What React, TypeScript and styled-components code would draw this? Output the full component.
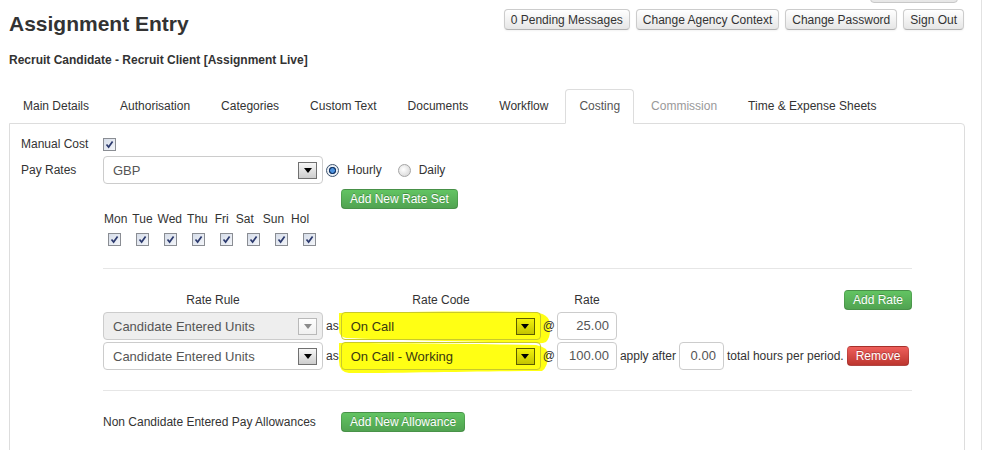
import React from 'react';
import styled, { createGlobalStyle } from 'styled-components';

const GlobalStyle = createGlobalStyle`
  html, body {
    margin: 0;
    padding: 0;
    background: #fff;
    overflow: hidden;
  }
  body {
    font-family: "Liberation Sans", Arial, sans-serif;
    font-size: 12px;
    color: #333;
  }
`;

const Page = styled.div`
  box-sizing: border-box;
  width: 982px;
  min-height: 450px;
  padding: 0 16px 0 9px;
  border-right: 1px solid #e2e2e2;
`;

const StubRow = styled.div`
  display: flex;
  justify-content: flex-end;
  height: 3px;
`;

const StubButton = styled.div`
  box-sizing: border-box;
  width: 88px;
  height: 21px;
  margin-top: -18px;
  margin-right: 7px;
  border: 1px solid #c8c8c8;
  border-radius: 4px;
  background: linear-gradient(#ffffff, #e6e6e6);
`;

const Header = styled.div`
  display: flex;
  justify-content: space-between;
  align-items: flex-start;
  margin-top: 6px;
`;

const Title = styled.h1`
  margin: 0;
  padding-top: 2px;
  font-size: 21px;
  line-height: 26px;
  font-weight: bold;
  color: #333;
`;

const TopButtons = styled.div`
  display: flex;
  gap: 6px;
  margin-right: 1px;
`;

const TopButton = styled.button`
  box-sizing: border-box;
  height: 21px;
  padding: 0 6px;
  font-family: inherit;
  font-size: 12px;
  color: #333;
  border: 1px solid #cccccc;
  border-bottom-color: #b3b3b3;
  border-radius: 4px;
  background: linear-gradient(#ffffff, #e6e6e6);
  box-shadow: inset 0 1px 0 rgba(255, 255, 255, 0.2), 0 1px 2px rgba(0, 0, 0, 0.05);
`;

const Subtitle = styled.div`
  margin-top: 15px;
  font-weight: bold;
  line-height: 16px;
`;

const Tabs = styled.div`
  display: flex;
  margin-top: 21px;
  margin-bottom: -1px;
  position: relative;
  z-index: 1;
`;

const Tab = styled.div<{ $active?: boolean; $muted?: boolean }>`
  box-sizing: border-box;
  height: 35px;
  padding: 9px 13px;
  line-height: 15px;
  margin-right: 3px;
  border: 1px solid ${p => (p.$active ? '#ddd' : 'transparent')};
  border-bottom-color: ${p => (p.$active ? '#fff' : 'transparent')};
  border-radius: 4px 4px 0 0;
  background: ${p => (p.$active ? '#fff' : 'transparent')};
  color: ${p => (p.$muted ? '#999' : p.$active ? '#555' : '#333')};
`;

const Panel = styled.div`
  border: 1px solid #ddd;
  border-radius: 0 4px 0 0;
  padding: 11px 52px 0 11px;
  min-height: 330px;
`;

const FormRow = styled.div<{ $top?: number }>`
  display: flex;
  align-items: center;
  margin-top: ${p => p.$top ?? 0}px;
  min-height: 18px;
`;

const Label = styled.div`
  width: 82px;
  flex-shrink: 0;
`;

const CheckBox = styled.span`
  box-sizing: border-box;
  display: inline-flex;
  align-items: center;
  justify-content: center;
  width: 13px;
  height: 13px;
  border: 1px solid #8a8d93;
  background: linear-gradient(135deg, #d6dde9, #f3f5f9);
`;

const Check = () => (
  <CheckBox>
    <svg width="11" height="11" viewBox="0 0 11 11">
      <path d="M2.5 5.5 L4.6 8 L8.6 2.4" fill="none" stroke="#2c3a6e" strokeWidth="1.7" />
    </svg>
  </CheckBox>
);

const Select = styled.div<{ $w: number; $disabled?: boolean; $marked?: boolean }>`
  position: relative;
  z-index: 1;
  box-sizing: border-box;
  display: flex;
  align-items: center;
  justify-content: space-between;
  width: ${p => p.$w}px;
  height: 28px;
  padding: 0 5px 0 9px;
  border: 1px solid ${p => (p.$marked ? '#c9c92a' : '#ccc')};
  border-radius: 4px;
  background: ${p => (p.$marked ? 'transparent' : p.$disabled ? '#eeeeee' : '#fff')};
  font-size: 13px;
  color: ${p => (p.$marked ? '#3a3a10' : '#555')};
  flex-shrink: 0;
`;

const ArrowBox = styled.span<{ $disabled?: boolean; $marked?: boolean }>`
  box-sizing: border-box;
  display: inline-flex;
  align-items: center;
  justify-content: center;
  width: 19px;
  height: 17px;
  border: 1px solid ${p => (p.$disabled ? '#b9b9b9' : p.$marked ? '#5c5c00' : '#707070')};
  background: ${p =>
    p.$disabled
      ? 'linear-gradient(#fdfdfd, #f0f0f0)'
      : p.$marked
        ? 'linear-gradient(#f2f20a, #c4c400)'
        : 'linear-gradient(#f7f7f7, #cdcdcd)'};

  &::after {
    content: '';
    border-left: 4px solid transparent;
    border-right: 4px solid transparent;
    border-top: 5px solid ${p => (p.$disabled ? '#8a8a8a' : '#000')};
  }
`;

const Radio = styled.span<{ $checked?: boolean }>`
  box-sizing: border-box;
  display: inline-block;
  width: 13px;
  height: 13px;
  border-radius: 50%;
  border: 1px solid ${p => (p.$checked ? '#3f5570' : '#a5a5a5')};
  background: ${p =>
    p.$checked
      ? 'radial-gradient(circle, #4d93e0 0 2px, #15396b 2.6px 3.4px, #e9eef4 4px)'
      : 'radial-gradient(circle at 40% 40%, #ffffff, #d0d0d0)'};
`;

const RadioText = styled.span<{ $gapRight?: number }>`
  margin-left: 8px;
  margin-right: ${p => p.$gapRight ?? 0}px;
  font-size: 12px;
`;

const Btn = styled.button<{ $variant: 'success' | 'danger' }>`
  box-sizing: border-box;
  height: 20px;
  padding: 0 8px;
  font-family: inherit;
  font-size: 12px;
  color: #fff;
  text-shadow: 0 -1px 0 rgba(0, 0, 0, 0.25);
  border: 1px solid rgba(0, 0, 0, 0.12);
  border-bottom-color: rgba(0, 0, 0, 0.25);
  border-radius: 4px;
  white-space: nowrap;
  flex-shrink: 0;
  background: ${p =>
    p.$variant === 'success'
      ? 'linear-gradient(#62c462, #51a351)'
      : 'linear-gradient(#ee5f5b, #bd362f)'};
`;

const Indent = styled.div<{ $left: number }>`
  margin-left: ${p => p.$left}px;
`;

const DayLabels = styled.div`
  display: flex;
  gap: 5px;
  margin-top: 3px;
  line-height: 15px;
  padding-left: 1px;
`;

const DayLabel = styled.span<{ $extra?: number }>`
  margin-left: ${p => p.$extra ?? 0}px;
`;

const DayChecks = styled.div`
  display: grid;
  grid-template-columns: repeat(8, 27.9px);
  margin-top: 6px;
  padding-left: 5px;
`;

const Section = styled.div`
  margin-left: 82px;
`;

const Divider = styled.div<{ $top: number }>`
  margin-top: ${p => p.$top}px;
  border-top: 1px solid #e6e6e6;
`;

const HeadRow = styled.div`
  display: flex;
  align-items: center;
  margin-top: 21px;
  height: 20px;
`;

const Head = styled.div<{ $w: number; $after: number }>`
  width: ${p => p.$w}px;
  margin-right: ${p => p.$after}px;
  text-align: center;
  flex-shrink: 0;
`;

const Spacer = styled.div`
  flex: 1;
`;

const RateRow = styled.div`
  display: flex;
  align-items: center;
  margin-top: 2px;
  height: 28px;
  white-space: nowrap;
`;

const Word = styled.span<{ $l: number; $r: number }>`
  position: relative;
  z-index: 1;
  padding: 0 ${p => p.$r}px 0 ${p => p.$l}px;
`;

const CodeCell = styled.div`
  position: relative;
`;

/* marker-pen annotation drawn over the rate code selects */
const Highlight = styled.svg`
  position: absolute;
  left: -4px;
  top: -1px;
  z-index: 0;
  overflow: visible;
  pointer-events: none;
`;

const NumInput = styled.div<{ $w: number }>`
  position: relative;
  z-index: 1;
  box-sizing: border-box;
  width: ${p => p.$w}px;
  height: 28px;
  line-height: 26px;
  padding-right: 7px;
  border: 1px solid #ccc;
  border-radius: 4px;
  text-align: right;
  font-size: 13px;
  color: #555;
  flex-shrink: 0;
  background: #fff;
`;

const AllowanceRow = styled.div`
  display: flex;
  align-items: center;
  margin-top: 21px;
  height: 20px;
`;

const AllowanceText = styled.span`
  width: 238px;
`;

const days = ['Mon', 'Tue', 'Wed', 'Thu', 'Fri', 'Sat', 'Sun', 'Hol'];
const dayExtra: Record<string, number> = { Fri: 2, Sat: 2, Sun: 4, Hol: 2 };

const tabs = [
  'Main Details',
  'Authorisation',
  'Categories',
  'Custom Text',
  'Documents',
  'Workflow',
  'Costing',
  'Commission',
  'Time & Expense Sheets',
];

const highlightPaths = [
  'M2 2 C60 1 140 0 195 1 Q213 2 213 14 Q214 26 209 31 Q205 33 198 32 C140 31 60 29 9 27 Q2 26 2 18 Z',
  'M2 2 C60 2 140 3 199 4 Q211 6 211 14 Q211 26 205 30 C140 30 60 32 12 32 Q2 31 2 20 Z',
];

const CodeSelect: React.FC<{ text: string; index: number }> = ({ text, index }) => (
  <CodeCell>
    <Highlight width="218" height="34" viewBox="0 0 218 34">
      <path d={highlightPaths[index]} fill="#ffff14" />
    </Highlight>
    <Select $w={200} $marked>
      {text}
      <ArrowBox $marked />
    </Select>
  </CodeCell>
);

const App: React.FC = () => {
  return (
    <>
      <GlobalStyle />
      <Page>
        <StubRow>
          <StubButton />
        </StubRow>
        <Header>
          <Title>Assignment Entry</Title>
          <TopButtons>
            <TopButton>0 Pending Messages</TopButton>
            <TopButton>Change Agency Context</TopButton>
            <TopButton>Change Password</TopButton>
            <TopButton>Sign Out</TopButton>
          </TopButtons>
        </Header>
        <Subtitle>Recruit Candidate - Recruit Client [Assignment Live]</Subtitle>

        <Tabs>
          {tabs.map(t => (
            <Tab key={t} $active={t === 'Costing'} $muted={t === 'Commission'}>
              {t}
            </Tab>
          ))}
        </Tabs>

        <Panel>
          <FormRow>
            <Label>Manual Cost</Label>
            <Check />
          </FormRow>

          <FormRow $top={3}>
            <Label>Pay Rates</Label>
            <Select $w={220}>
              GBP
              <ArrowBox />
            </Select>
            <Radio $checked style={{ marginLeft: 3 }} />
            <RadioText $gapRight={16}>Hourly</RadioText>
            <Radio />
            <RadioText>Daily</RadioText>
          </FormRow>

          <FormRow $top={5}>
            <Label />
            <Indent $left={238}>
              <Btn $variant="success">Add New Rate Set</Btn>
            </Indent>
          </FormRow>

          <Section>
            <DayLabels>
              {days.map(d => (
                <DayLabel key={d} $extra={dayExtra[d]}>
                  {d}
                </DayLabel>
              ))}
            </DayLabels>
            <DayChecks>
              {days.map(d => (
                <Check key={d} />
              ))}
            </DayChecks>

            <Divider $top={22} />

            <HeadRow>
              <Head $w={220} $after={18}>Rate Rule</Head>
              <Head $w={200} $after={16}>Rate Code</Head>
              <Head $w={60} $after={0}>Rate</Head>
              <Spacer />
              <Btn $variant="success">Add Rate</Btn>
            </HeadRow>

            <RateRow>
              <Select $w={220} $disabled>
                Candidate Entered Units
                <ArrowBox $disabled />
              </Select>
              <Word $l={3} $r={2}>as</Word>
              <CodeSelect text="On Call" index={0} />
              <Word $l={2} $r={2}>@</Word>
              <NumInput $w={60}>25.00</NumInput>
            </RateRow>

            <RateRow>
              <Select $w={220}>
                Candidate Entered Units
                <ArrowBox />
              </Select>
              <Word $l={3} $r={2}>as</Word>
              <CodeSelect text="On Call - Working" index={1} />
              <Word $l={2} $r={2}>@</Word>
              <NumInput $w={60}>100.00</NumInput>
              <Word $l={3} $r={3}>apply after</Word>
              <NumInput $w={45}>0.00</NumInput>
              <Word $l={3} $r={3}>total hours per period.</Word>
              <Btn $variant="danger">Remove</Btn>
            </RateRow>

            <Divider $top={20} />

            <AllowanceRow>
              <AllowanceText>Non Candidate Entered Pay Allowances</AllowanceText>
              <Btn $variant="success">Add New Allowance</Btn>
            </AllowanceRow>
          </Section>
        </Panel>
      </Page>
    </>
  );
};

export default App;
